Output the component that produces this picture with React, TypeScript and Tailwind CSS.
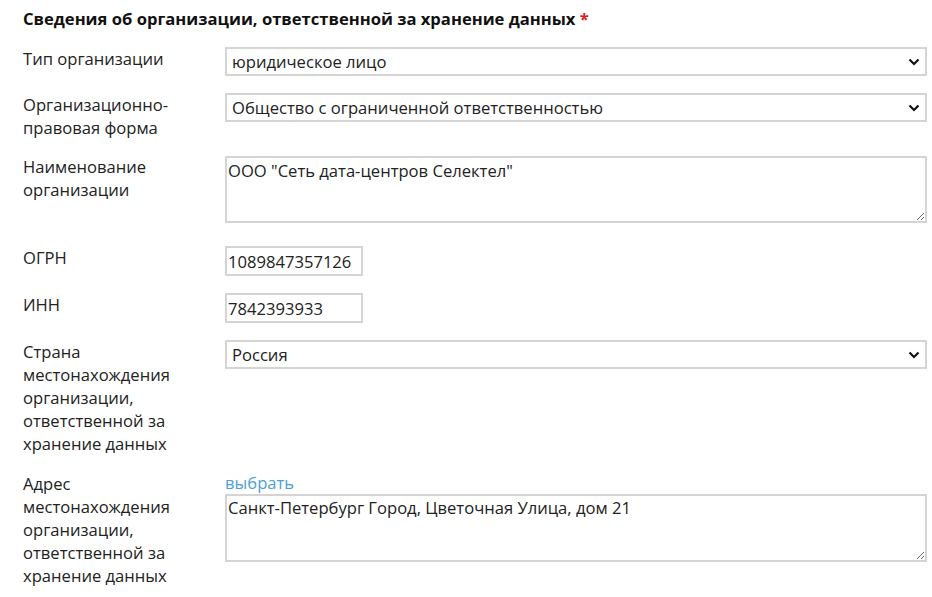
import React from "react";

const font = { fontFamily: '"Open Sans", "Noto Sans", sans-serif' };

function Chevron() {
  return (
    <svg
      className="pointer-events-none absolute right-[7px] top-1/2 -translate-y-1/2"
      width="12"
      height="8"
      viewBox="0 0 12 8"
    >
      <path d="M1.5 1.5 L6 6 L10.5 1.5" fill="none" stroke="#111" strokeWidth="2.2" />
    </svg>
  );
}

function Select({ value }: { value: string }) {
  return (
    <div className="relative w-full">
      <select
        defaultValue={value}
        className="block h-[29px] w-full appearance-none border-2 border-[#d4d4d4] bg-white pl-[5px] pr-6 text-[16.6px] leading-[23px] text-[#222] outline-none"
        style={font}
      >
        <option>{value}</option>
      </select>
      <Chevron />
    </div>
  );
}

function Row({ label, children, mb = "mb-[17px]" }: { label: React.ReactNode; children: React.ReactNode; mb?: string }) {
  return (
    <div className={`flex ${mb}`}>
      <div className="w-[202px] shrink-0 pr-2 text-[16.6px] leading-[23px] text-[#222]">{label}</div>
      <div className="flex-1">{children}</div>
    </div>
  );
}

export default function App() {
  return (
    <div className="min-h-[597px] w-[932px] bg-white pl-[23px] pr-[5px] pt-[7px]" style={font}>
      <div className="mb-[17px] text-[16.6px] font-bold leading-[23px] text-[#111]">
        Сведения об организации, ответственной за хранение данных <span className="text-[#e02020]">*</span>
      </div>

      <Row label="Тип организации">
        <Select value="юридическое лицо" />
      </Row>

      <Row label={<>Организационно-<br />правовая форма</>} mb="mb-[16px]">
        <Select value="Общество с ограниченной ответственностью" />
      </Row>

      <Row label={<>Наименование<br />организации</>} mb="mb-[23px]">
        <textarea
          defaultValue={'ООО "Сеть дата-центров Селектел"'}
          className="mt-[1px] block h-[67px] w-full border-2 border-[#d4d4d4] bg-white px-[1px] pt-[1px] text-[16.6px] leading-[23px] text-[#222] outline-none"
          style={font}
        />
      </Row>

      <Row label="ОГРН">
        <input
          defaultValue="1089847357126"
          className="block h-[30px] w-[138px] border-2 border-[#d4d4d4] bg-white px-[1px] text-[16.6px] text-[#222] outline-none"
          style={font}
        />
      </Row>

      <Row label="ИНН">
        <input
          defaultValue="7842393933"
          className="block h-[30px] w-[138px] border-2 border-[#d4d4d4] bg-white px-[1px] text-[16.6px] text-[#222] outline-none"
          style={font}
        />
      </Row>

      <Row label={<>Страна<br />местонахождения<br />организации,<br />ответственной за<br />хранение данных</>}>
        <Select value="Россия" />
      </Row>

      <Row label={<>Адрес<br />местонахождения<br />организации,<br />ответственной за<br />хранение данных</>}>
        <div className="text-[16.6px] leading-[22px] text-[#4d9fd6]">выбрать</div>
        <textarea
          defaultValue="Санкт-Петербург Город, Цветочная Улица, дом 21"
          className="block h-[68px] w-full border-2 border-[#d4d4d4] bg-white px-[1px] pt-0 text-[16.6px] leading-[23px] text-[#222] outline-none"
          style={font}
        />
      </Row>
    </div>
  );
}
